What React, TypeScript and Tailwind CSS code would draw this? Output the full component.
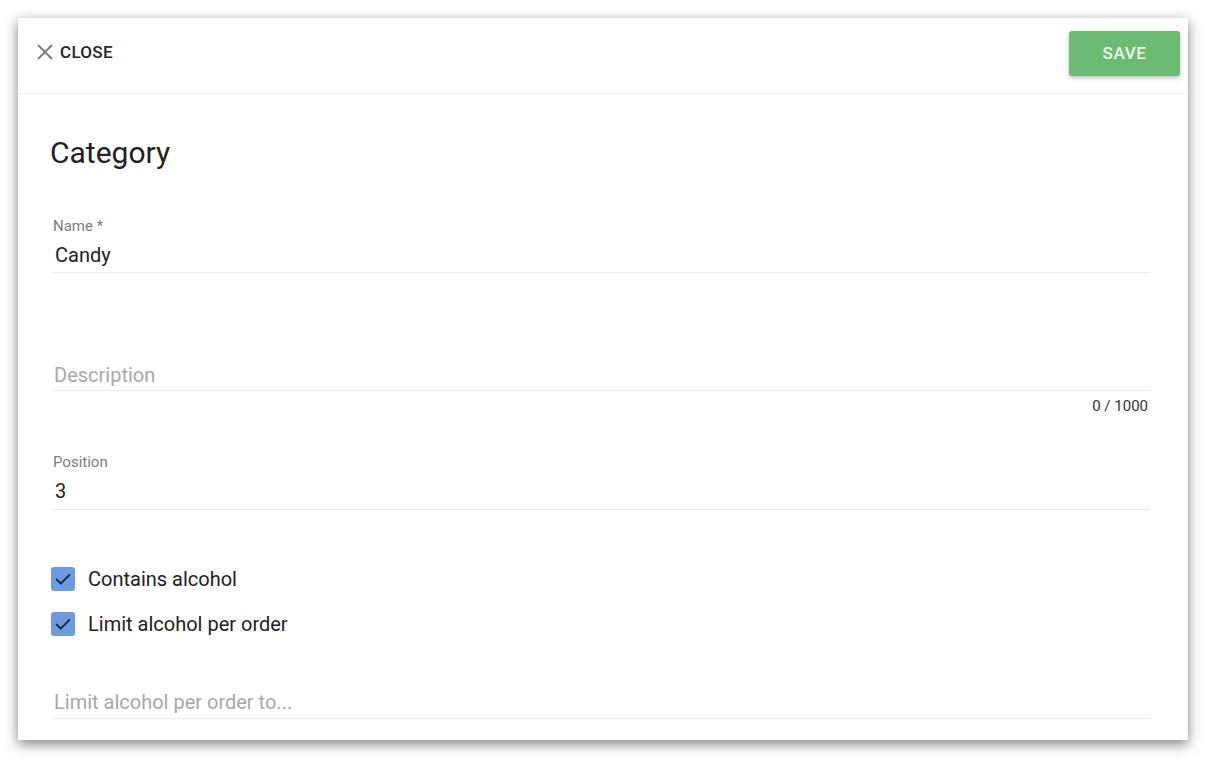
import React from "react";

function Check() {
  return (
    <div className="w-[24px] h-[24px] rounded-[3px] bg-[#6c9be0] flex items-center justify-center">
      <svg width="22" height="22" viewBox="0 0 24 24" fill="none">
        <path d="M5 12.5l4.5 4.5L19 7.5" stroke="#172338" strokeWidth="2" strokeLinecap="round" strokeLinejoin="round" />
      </svg>
    </div>
  );
}

export default function App() {
  return (
    <div className="w-[1208px] h-[764px] bg-white pt-[18px] pl-[18px] font-['Roboto',sans-serif]">
      <div className="w-[1170px] h-[722px] bg-white shadow-[0_4px_12px_rgba(0,0,0,0.5)] flex flex-col">
        <div className="h-[76px] shrink-0 border-b border-[#f2f2f2] flex items-start justify-between pl-[18px] pr-[8px]">
          <div className="mt-[24px] h-[20px] flex items-center gap-[6px]">
            <svg width="18" height="18" viewBox="0 0 18 18" fill="none">
              <path d="M2 2l14 14M16 2L2 16" stroke="#7a7a7a" strokeWidth="1.8" />
            </svg>
            <span className="text-[17px] leading-[20px] font-medium text-[#262626] tracking-[0.3px]">CLOSE</span>
          </div>
          <button className="mt-[13px] w-[111px] h-[45px] rounded-[3px] bg-[#6dbb72] text-[#eaf6ea] text-[17px] font-medium tracking-[0.6px] shadow-[0_2px_4px_rgba(0,0,0,0.25)]">
            SAVE
          </button>
        </div>
        <div className="pl-[34px] pr-[38px]">
          <div className="mt-[41px] h-[36px] leading-[36px] text-[30px] text-[#222] -ml-[2px]">Category</div>

          <div className="mt-[45px] border-b border-[#ececec] pb-[3px]">
            <div className="h-[20px] leading-[20px] text-[15px] text-[#7d7d7d] pl-[1px]">Name *</div>
            <div className="mt-[5px] h-[28px] leading-[28px] text-[20px] text-[#222] pl-[3px]">Candy</div>
          </div>

          <div className="mt-[88px] border-b border-[#ececec] pb-[1px]">
            <div className="h-[28px] leading-[28px] text-[20px] text-[#a8a8a8] pl-[2px]">Description</div>
          </div>
          <div className="mt-[5px] h-[20px] leading-[20px] text-[15px] text-[#333] text-right pr-[2px]">0 / 1000</div>

          <div className="mt-[36px] border-b border-[#ececec] pb-[4px]">
            <div className="h-[20px] leading-[20px] text-[15px] text-[#7d7d7d] pl-[1px]">Position</div>
            <div className="mt-[5px] h-[28px] leading-[28px] text-[20px] text-[#222] pl-[3px]">3</div>
          </div>

          <div className="mt-[57px] h-[24px] flex items-center gap-[13px] -ml-[1px]">
            <Check />
            <span className="text-[20px] text-[#222]">Contains alcohol</span>
          </div>
          <div className="mt-[21px] h-[24px] flex items-center gap-[13px] -ml-[1px]">
            <Check />
            <span className="text-[20px] text-[#222]">Limit alcohol per order</span>
          </div>

          <div className="mt-[52px] border-b border-[#ececec] pb-[2px]">
            <div className="h-[28px] leading-[28px] text-[20px] text-[#a8a8a8] pl-[2px]">Limit alcohol per order to...</div>
          </div>
        </div>
      </div>
    </div>
  );
}
